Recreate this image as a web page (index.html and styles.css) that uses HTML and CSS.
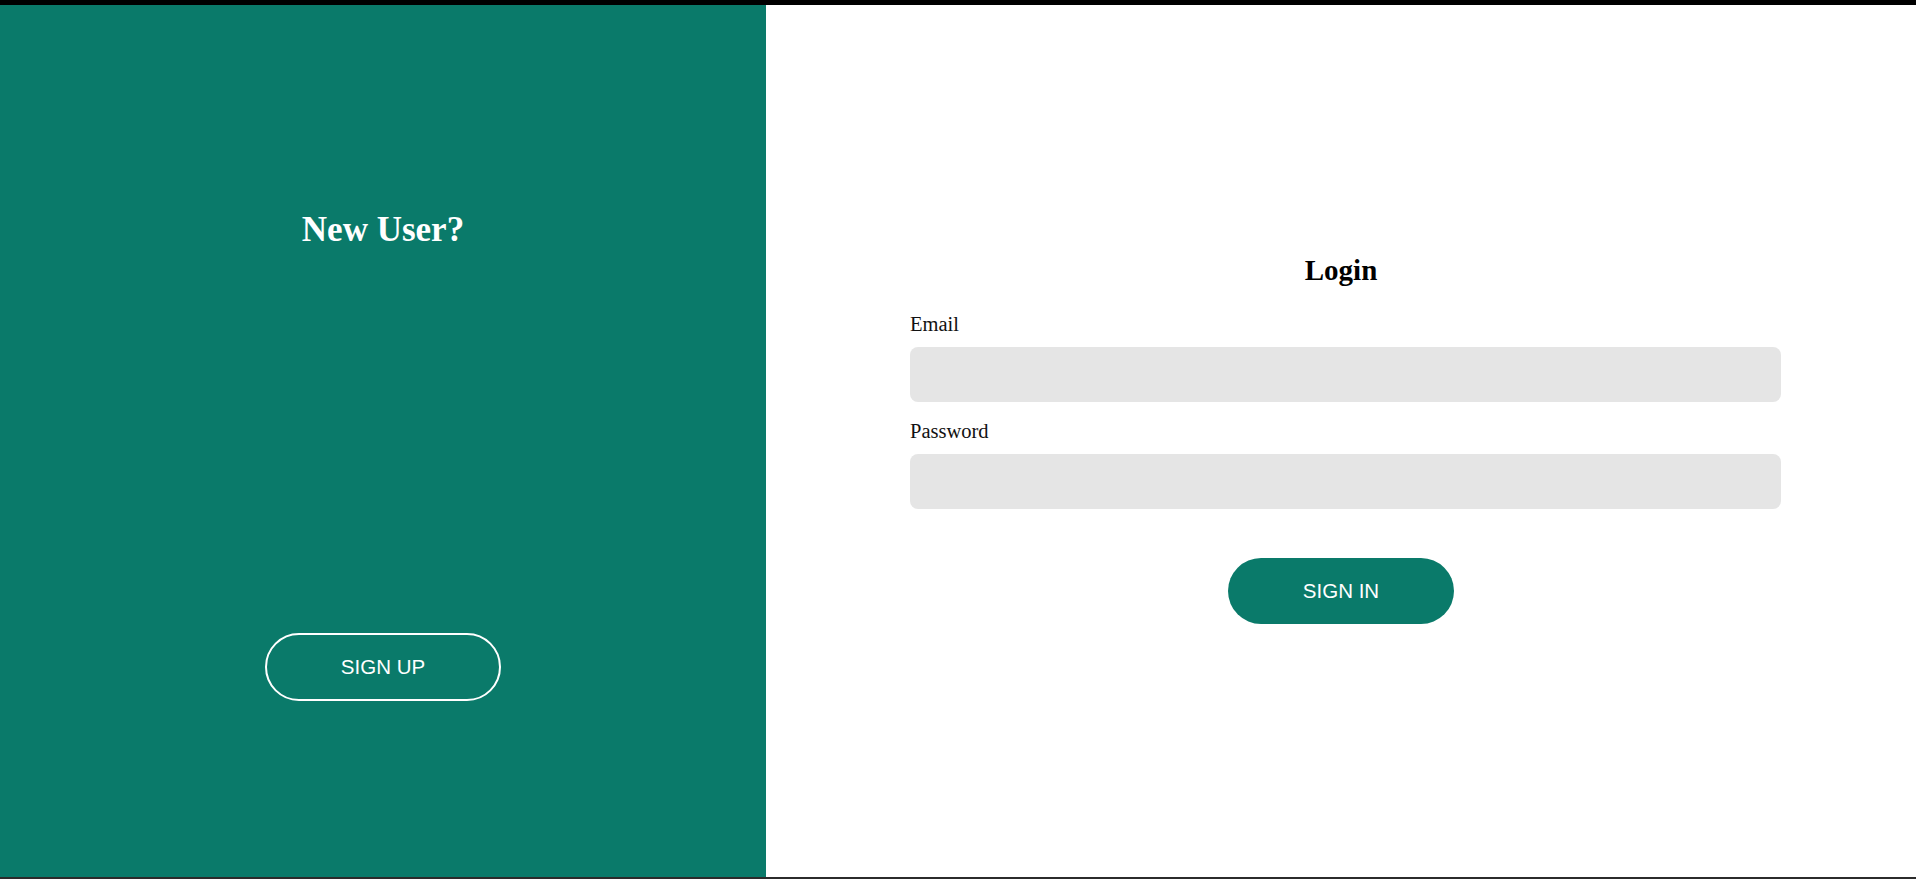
FILE: index.html
```html
<!DOCTYPE html>
<html>
<head>
<meta charset="utf-8">
<title>Login</title>
<link rel="stylesheet" href="styles.css">
</head>
<body>
<div class="topbar"></div>
<div class="container">
  <section class="left">
    <h1 class="left-title">New User?</h1>
    <button class="btn-outline">SIGN UP</button>
  </section>
  <section class="right">
    <form class="form">
      <h2 class="form-title">Login</h2>
      <label class="label" for="email">Email</label>
      <input class="input" id="email" type="email">
      <label class="label label-pw" for="password">Password</label>
      <input class="input" id="password" type="password">
      <div class="actions">
        <button type="button" class="btn-solid">SIGN IN</button>
      </div>
    </form>
  </section>
</div>
<div class="bottombar"></div>
</body>
</html>
```
FILE: styles.css
```css
html, body {
  margin: 0;
  padding: 0;
  height: 100%;
  overflow: hidden;
}
body {
  background: #ffffff;
  font-family: "Liberation Serif", "Times New Roman", serif;
}
.topbar {
  height: 5px;
  background: #000;
}
.bottombar {
  height: 2px;
  background: #2b2b2b;
}
.container {
  display: flex;
  height: 872px;
}
.left {
  width: 766px;
  flex: none;
  background: #0a7a6a;
  display: flex;
  flex-direction: column;
  align-items: center;
}
.left-title {
  margin: 205px 0 0;
  color: #fff;
  font-size: 35px;
  font-weight: bold;
  line-height: 39px;
}
.btn-outline {
  margin-top: 384px;
  height: 68px;
  padding: 0 74px;
  border: 2px solid #fff;
  border-radius: 34px;
  background: transparent;
  color: #fff;
  font-family: "Liberation Sans", Arial, sans-serif;
  font-size: 20.5px;
}
.right {
  flex: 1;
  display: flex;
  justify-content: center;
  align-items: flex-start;
}
.form {
  width: 862px;
  margin-top: 249px;
  display: flex;
  flex-direction: column;
}
.form-title {
  margin: 0 0 27px;
  text-align: center;
  font-size: 29px;
  font-weight: bold;
  line-height: 32px;
  color: #000;
}
.label {
  font-size: 20.5px;
  line-height: 23px;
  color: #111;
}
.label-pw {
  margin-top: 18px;
}
.input {
  box-sizing: border-box;
  width: 871px;
  height: 55px;
  margin-top: 11px;
  border: none;
  border-radius: 8px;
  background: #e5e5e5;
}
.actions {
  display: flex;
  justify-content: center;
  margin-top: 49px;
}
.btn-solid {
  height: 66px;
  padding: 0 75px;
  border: none;
  border-radius: 33px;
  background: #0a7a6a;
  color: #fff;
  font-family: "Liberation Sans", Arial, sans-serif;
  font-size: 20.5px;
}
```
